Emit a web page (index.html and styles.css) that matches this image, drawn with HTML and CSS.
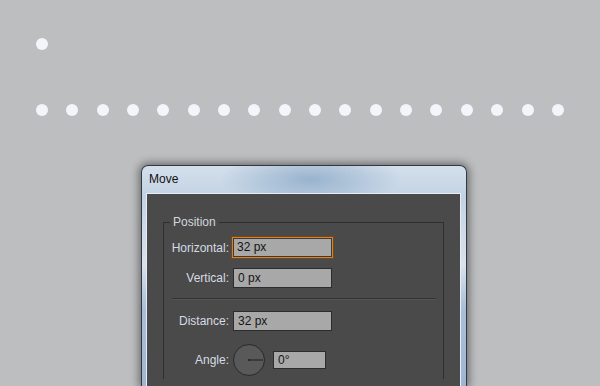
FILE: index.html
```html
<!DOCTYPE html>
<html lang="en">
<head>
    <meta charset="UTF-8">
    <meta name="viewport" content="width=device-width, initial-scale=1.0">
    <title>Move</title>
    <link rel="stylesheet" href="styles.css">
</head>
<body>
    <div class="artboard">
        <div class="dot single"></div>
        <div class="dot-row">
            <div class="dot"></div><div class="dot"></div><div class="dot"></div>
            <div class="dot"></div><div class="dot"></div><div class="dot"></div>
            <div class="dot"></div><div class="dot"></div><div class="dot"></div>
            <div class="dot"></div><div class="dot"></div><div class="dot"></div>
            <div class="dot"></div><div class="dot"></div><div class="dot"></div>
            <div class="dot"></div><div class="dot"></div><div class="dot"></div>
        </div>
    </div>

    <div class="window">
        <div class="title-bar">Move</div>
        <div class="dialog">
            <fieldset class="group">
                <legend>Position</legend>
                <div class="field">
                    <label>Horizontal:</label>
                    <div class="input focused">32 px</div>
                </div>
                <div class="field">
                    <label>Vertical:</label>
                    <div class="input">0 px</div>
                </div>
                <div class="separator"></div>
                <div class="field">
                    <label>Distance:</label>
                    <div class="input">32 px</div>
                </div>
                <div class="field angle-row">
                    <label>Angle:</label>
                    <div class="dial">
                        <svg width="32" height="32" viewBox="0 0 32 32">
                            <circle cx="16" cy="16" r="15.5" fill="#595959" stroke="#2a2a2a" stroke-width="1"/>
                            <line x1="16" y1="16" x2="30" y2="16" stroke="#1e1e1e" stroke-width="1"/>
                            <circle cx="16" cy="16" r="1" fill="#1e1e1e"/>
                        </svg>
                    </div>
                    <div class="input small">0°</div>
                </div>
            </fieldset>
        </div>
    </div>
</body>
</html>
```

FILE: styles.css
```css
/* General Styling */
body {
    margin: 0;
    height: 386px;
    overflow: hidden;
    background: #bdbec0;
    font-family: "Liberation Sans", Arial, sans-serif;
    font-size: 12px;
}

/* Dots on the artboard */
.artboard {
    padding: 38px 0 0 36px;
}

.dot {
    width: 12px;
    height: 12px;
    border-radius: 50%;
    background: #f4f4fa;
}

.dot-row {
    display: flex;
    gap: 18.35px;
    margin-top: 54px;
}

/* Window frame */
.window {
    margin: 49px 0 0 141px;
    padding: 0 5px 0 4px;
    box-sizing: border-box;
    width: 326px;
    height: 221px;
    overflow: hidden;
    border: 1px solid #33383f;
    border-bottom: none;
    border-radius: 7px 7px 0 0;
    background:
        radial-gradient(ellipse 90px 30px at 52% 6%, rgba(140, 170, 200, 0.8), rgba(140, 170, 200, 0)),
        linear-gradient(180deg, #d3dfeb 0%, #c3d3e4 14%, #d9e2ec 45%, #a9bed8 65%, #9fb6d3 100%);
    box-shadow: 0 0 9px 2px rgba(0, 0, 0, 0.45);
}

.title-bar {
    height: 27px;
    line-height: 26px;
    padding-left: 3px;
    color: #111;
}

.dialog {
    height: 194px;
    box-sizing: border-box;
    background: #4a4a4a;
    border: 1px solid #e6edf4;
    border-bottom: none;
    padding-top: 21px;
}

/* Position group */
.group {
    margin: 0 16px;
    padding: 8px 0 0 0;
    border: 1px solid #2e2e2e;
    border-bottom: none;
    height: 164px;
    box-sizing: border-box;
}

.group legend {
    margin-left: 6px;
    padding: 0 3px;
    color: #d2d6dc;
}

.field {
    display: grid;
    grid-template-columns: 65px auto;
    column-gap: 4px;
    align-items: center;
    margin-bottom: 10px;
}

.field label {
    text-align: right;
    color: #d6dbe3;
}

.input {
    width: 99px;
    height: 20px;
    box-sizing: border-box;
    padding-left: 4px;
    line-height: 18px;
    background: #a8a8a8;
    border: 1px solid #2c2c2c;
    color: #151515;
}

.input.focused {
    border-color: #e4801a;
    box-shadow: inset 0 0 0 1px #3b3b3b, 0 0 0 1px #6a4a2a;
    margin-left: -1px;
    width: 101px;
    height: 21px;
}

.input.small {
    width: 53px;
    height: 18px;
    line-height: 16px;
}

.separator {
    margin: 10px 7px 11px 8px;
    border-top: 1px solid #333;
    border-bottom: 1px solid #545454;
}

.angle-row {
    grid-template-columns: 65px 32px auto;
    margin-top: 13px;
    margin-bottom: 0;
}

.angle-row .input {
    margin-left: 4px;
}

.dial svg {
    display: block;
}
```
